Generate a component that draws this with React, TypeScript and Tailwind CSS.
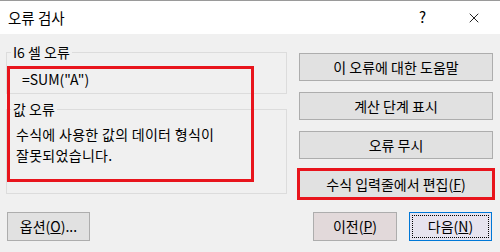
import { X } from "lucide-react";

function Btn({
  children,
  className = "",
}: {
  children: React.ReactNode;
  className?: string;
}) {
  return (
    <button
      className={`flex items-center justify-center border border-[#adadad] bg-[#e1e1e1] text-[14px] text-black ${className}`}
    >
      {children}
    </button>
  );
}

export default function App() {
  return (
    <div className="relative h-[252px] w-[500px] overflow-hidden bg-[#f0f0f0] font-['Noto_Sans_CJK_KR',sans-serif] text-black">
      {/* title bar */}
      <div className="flex h-[34px] items-center border-t border-[#9a9a9a] bg-white pl-[8px] pr-[18px]">
        <span className="text-[14.5px]">오류 검사</span>
        <span className="ml-auto mr-[40px] text-[15px]">?</span>
        <X size={16} strokeWidth={1.3} />
      </div>

      {/* body */}
      <div className="flex h-[178px] gap-[12px] pl-[6px] pr-[7px]">
        <div className="mt-[8px] flex w-[281px] flex-col gap-[5px]">
          <fieldset className="h-[52px] border border-[#dcdcdc]">
            <legend className="ml-[4px] px-[2px] text-[14px] leading-[20px]">
              I6 셀 오류
            </legend>
            <div className="mt-[7px] pl-[15px] text-[14px] leading-[20px]">
              =SUM("A")
            </div>
          </fieldset>
          <fieldset className="h-[95px] border border-[#dcdcdc]">
            <legend className="ml-[4px] px-[2px] text-[14px] leading-[20px]">
              값 오류
            </legend>
            <p className="mt-[5px] pl-[9px] text-[14px] leading-[20.5px] tracking-[0.3px]">
              수식에 사용한 값의 데이터 형식이
              <br />
              잘못되었습니다.
            </p>
          </fieldset>
        </div>

        <div className="mt-[19px] flex w-[194px] flex-col">
          <Btn className="h-[28px]">이 오류에 대한 도움말</Btn>
          <Btn className="mt-[11px] h-[28px]">계산 단계 표시</Btn>
          <Btn className="mt-[11px] h-[28px]">오류 무시</Btn>
          <div className="relative mt-[11px]">
            <Btn className="h-[28px] w-full">
              수식 입력줄에서 편집(<span className="underline">F</span>)
            </Btn>
            <div className="pointer-events-none absolute -inset-x-[2px] -inset-y-[2px] border-[3px] border-[#e8141c]" />
          </div>
        </div>
      </div>

      {/* bottom buttons */}
      <div className="flex h-[29px] pl-[7px] pr-[8px]">
        <Btn className="h-[29px] w-[83px]">
          옵션(<span className="underline">O</span>)...
        </Btn>
        <button className="ml-auto flex h-[29px] w-[84px] items-center justify-center border border-[#adadad] bg-[#e2d9da] text-[14px]">
          이전(<span className="underline">P</span>)
        </button>
        <button className="ml-[12px] flex h-[29px] w-[83px] items-center justify-center border border-[#0078d7] bg-[#e6e3ef] p-[2px] text-[14px]">
          <span className="flex h-full w-full items-center justify-center border border-dotted border-black">
            다음(<span className="underline">N</span>)
          </span>
        </button>
      </div>

      {/* red highlight over the error details */}
      <div className="pointer-events-none absolute left-[7px] top-[66px] h-[116px] w-[247px] border-[3px] border-[#e8141c]" />
    </div>
  );
}
